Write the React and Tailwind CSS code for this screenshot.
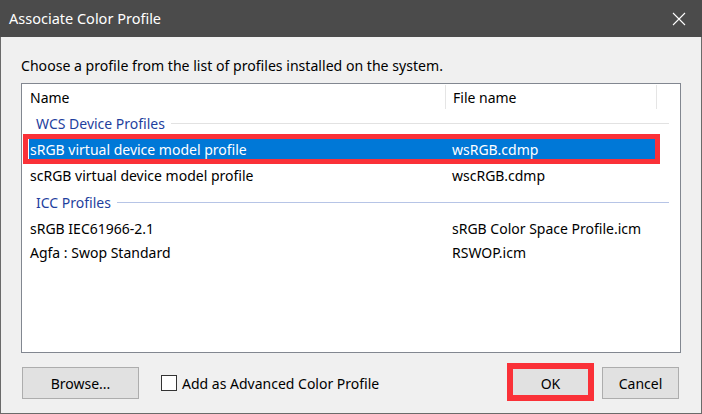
import React from 'react';

const font = "font-['Noto_Sans',sans-serif]";

function Row({ name, file }) {
  return (
    <div className="flex h-[24px] items-center pl-[8px] text-[14px] text-black">
      <span className="w-[422px] shrink-0">{name}</span>
      <span>{file}</span>
    </div>
  );
}

function GroupHeader({ label, lineColor, height }) {
  return (
    <div className={`flex items-center pl-[14px] pr-[11px] ${height}`}>
      <span className="text-[14px] text-[#1f3f9e]">{label}</span>
      <div className={`ml-[6px] h-px flex-1 ${lineColor}`} />
    </div>
  );
}

export default function App() {
  return (
    <div className={`flex h-[414px] w-[702px] flex-col ${font}`}>
      {/* Title bar */}
      <div className="flex h-[37px] shrink-0 items-center justify-between bg-[#4b4b4b] pl-[9px] pr-[16px]">
        <span className="text-[14.5px] text-white">Associate Color Profile</span>
        <svg width="14" height="14" viewBox="0 0 14 14" className="text-white">
          <path d="M1 1 L13 13 M13 1 L1 13" stroke="currentColor" strokeWidth="1.1" />
        </svg>
      </div>

      {/* Body */}
      <div className="flex flex-1 flex-col border-x border-b border-[#6a6a6a] bg-[#f0f0f0] px-[20px]">
        <p className="mt-[19px] h-[20px] text-[14.1px] leading-[20px] text-black">
          Choose a profile from the list of profiles installed on the system.
        </p>

        {/* List */}
        <div className="mt-[7px] flex h-[270px] flex-col border border-[#828790] bg-white">
          <div className="flex h-[26px] items-center text-[14px] text-black">
            <span className="w-[423px] pl-[8px]">Name</span>
            <div className="h-[24px] w-px bg-[#e5e5e5]" />
            <span className="w-[210px] pl-[7px]">File name</span>
            <div className="h-[24px] w-px bg-[#e5e5e5]" />
          </div>

          <GroupHeader label="WCS Device Profiles" lineColor="bg-[#e2e2e2]" height="h-[26px]" />

          {/* Selected row */}
          <div className="relative h-[26px] py-[3px] pl-[7px] pr-[25px]">
            <div className="flex h-full items-center bg-[#0078d7] pl-[1px] text-[14px] text-white">
              <span className="w-[422px] shrink-0">sRGB virtual device model profile</span>
              <span>wsRGB.cdmp</span>
            </div>
            <div className="pointer-events-none absolute -top-[2px] -bottom-[2px] left-[1px] right-[20px] border-[5px] border-[#fa3138]" />
          </div>

          <div className="flex h-[26px] items-center pl-[8px] text-[14px] text-black">
            <span className="w-[422px] shrink-0">scRGB virtual device model profile</span>
            <span>wscRGB.cdmp</span>
          </div>

          <GroupHeader label="ICC Profiles" lineColor="bg-[#b6c4e6]" height="h-[28px]" />

          <Row name="sRGB IEC61966-2.1" file="sRGB Color Space Profile.icm" />
          <Row name="Agfa : Swop Standard" file="RSWOP.icm" />
        </div>

        {/* Buttons */}
        <div className="mt-[14px] flex h-[32px] items-center">
          <button className="ml-[1px] h-[32px] w-[117px] border border-[#adadad] bg-[#e1e1e1] text-[14px] text-black">
            Browse...
          </button>
          <label className="ml-[22px] flex items-center text-[14px] text-black">
            <span className="h-[16px] w-[16px] border border-[#333333] bg-white" />
            <span className="ml-[5px]">Add as Advanced Color Profile</span>
          </label>
          <div className="relative ml-auto">
            <button className="h-[32px] w-[77px] border border-[#0078d7] bg-[#e1e1e1] text-[14px] text-black">
              OK
            </button>
            <div className="pointer-events-none absolute -top-[4px] -bottom-[2px] -left-[5px] -right-[5px] border-[6px] border-[#fa3138]" />
          </div>
          <button className="ml-[13px] mr-[2px] h-[32px] w-[77px] border border-[#adadad] bg-[#e1e1e1] text-[14px] text-black">
            Cancel
          </button>
        </div>
      </div>
    </div>
  );
}
